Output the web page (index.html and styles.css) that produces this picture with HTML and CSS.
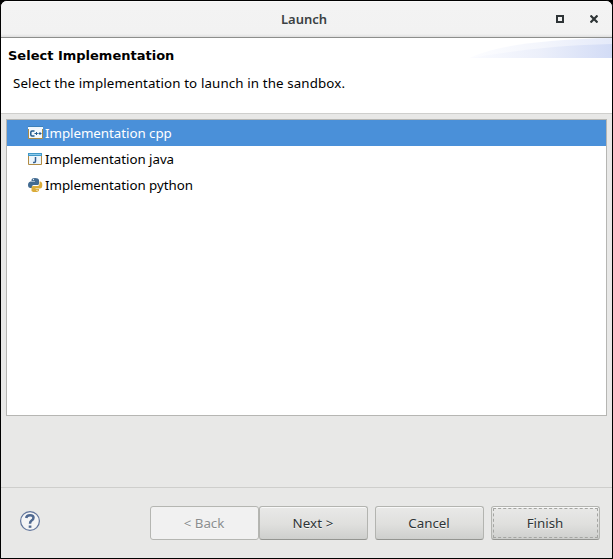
FILE: index.html
```html
<!DOCTYPE html>
<html lang="en">
<head>
<meta charset="utf-8">
<title>Launch</title>
<link rel="stylesheet" href="styles.css">
</head>
<body>
<div class="window">
  <header class="titlebar">
    <span class="title">Launch</span>
    <div class="controls">
      <svg width="8" height="8" viewBox="0 0 8 8"><path d="M1 1h6v6H1z" fill="none" stroke="#2e3436" stroke-width="2"/></svg>
      <svg width="8" height="8" viewBox="0 0 8 8"><path d="M.5.5l7 7M7.500.5L.5 7.500" fill="none" stroke="#2e3436" stroke-width="2.200"/></svg>
    </div>
  </header>
  <section class="banner">
    <h1>Select Implementation</h1>
    <p>Select the implementation to launch in the sandbox.</p>
    <svg class="swoosh" width="142" height="20" viewBox="0 0 142 20">
      <defs><linearGradient id="sky"><stop offset="0" stop-color="#fafbff"/><stop offset=".5" stop-color="#eaeefa"/><stop offset="1" stop-color="#cfd9f5"/></linearGradient></defs>
      <path d="M0 20C20 9 72 1 142 0V20Z" fill="url(#sky)" opacity=".55"/>
      <path d="M0 20C35 14 86 7 142 6V20Z" fill="url(#sky)" opacity=".85"/>
    </svg>
  </section>
  <main class="content">
    <ul class="list">
      <li class="selected">
        <svg width="16" height="16" viewBox="0 0 16 16"><path d="M.5 2.500h14v11H.5z" fill="#f3f8fd" stroke="#a98b48"/><path d="M0 1h15v3H0z" fill="#eef6fd"/><path d="M0 1.500h15" stroke="#3c7fb8"/><path d="M6.500 6H4q-1.200 0-1.200 1.200v2.600q0 1.200 1.200 1.200h2.500" fill="none" stroke="#245b8d" stroke-width="1.500"/><path d="M6.500 8.500h3.300M8.500 7v3M10.500 8.500h3M12 7v3" stroke="#245b8d"/></svg>
        <span>Implementation cpp</span>
      </li>
      <li>
        <svg width="16" height="16" viewBox="0 0 16 16"><path d="M.5 2.500h13v11H.5z" fill="#edf6fc" stroke="#b18b43"/><path d="M0 2h14v3H0z" fill="#4098c8"/><path d="M1 3.500h12" stroke="#8dcaeb"/><path d="M7.500 6v4.300q0 1.200-1.200 1.200H5" fill="none" stroke="#355f91" stroke-width="1.500"/></svg>
        <span>Implementation java</span>
      </li>
      <li>
        <svg width="16" height="16" viewBox="0 0 16 16"><path d="M3.500 4V3q0-2 3.500-2t4 2v3.500q0 1.500-1.500 1.500H5.500Q4 8 4 10v1H2.500Q0 11 0 8t2.500-3.500H7V4Z" fill="#426b91"/><path d="M11.500 4.500H12q2.300 0 2.300 3.500t-2.300 3.500H7.500v.5H11v1q0 2-4 2t-3.500-2v-2.500Q3.500 9 5 9h4.500q2 0 2-2Z" fill="#dbac39"/><circle cx="5.500" cy="2.600" r=".65" fill="#fff"/><circle cx="9" cy="13.300" r=".65" fill="#fff"/></svg>
        <span>Implementation python</span>
      </li>
    </ul>
  </main>
  <footer class="actions">
    <svg class="help" width="22" height="22" viewBox="0 0 22 22"><circle cx="11" cy="11" r="9.400" fill="#f5f5f6" stroke="#60749b" stroke-width="1.200"/><path d="M7.200 8Q7.500 5.200 11 5.200t3.500 2.500Q14.500 9.300 12.600 10.500Q11 11.500 11 13.800" fill="none" stroke="#506991" stroke-width="2.500"/><path d="M9.700 15.500h2.700v2.300H9.700z" fill="#506991"/></svg>
    <button class="back" disabled>&lt; Back</button>
    <button class="next">Next &gt;</button>
    <button class="cancel">Cancel</button>
    <button class="finish">Finish</button>
  </footer>
</div>
</body>
</html>
```
FILE: styles.css
```css
* { box-sizing: border-box; }
html { background: #000; }
body { margin: 0; font: 13.33px/20px "Noto Sans", sans-serif; color: #000; }
.window {
  height: 559px;
  border: 1px solid #000;
  border-radius: 7px 7px 0 0;
  background: #e8e8e7;
  overflow: hidden;
  display: flex;
  flex-direction: column;
}
.titlebar {
  position: relative;
  height: 37px;
  flex: none;
  display: flex;
  align-items: center;
  justify-content: center;
  background: linear-gradient(#fff 0, #f3f3f3 1px, #f2f2f2 33px, #dedede 36px);
  border-bottom: 1px solid #8d8e8c;
  color: #3b4143;
}
.title { font-weight: 600; font-size: 13px; margin-right: 5px; }
.controls { position: absolute; right: 14px; top: 14px; display: flex; gap: 26px; }
.banner {
  position: relative;
  height: 76px;
  flex: none;
  padding: 8px 7px 0;
  background: #fff;
  border-bottom: 1px solid #cfcfcd;
}
h1 { margin: 0; font: bold 13px/20px "DejaVu Sans", sans-serif; }
.banner p { margin: 7px 0 0 5px; letter-spacing: .12px; }
.swoosh { position: absolute; right: 0; top: 0; }
.content { height: 373px; flex: none; padding: 5px 5px 0; }
.list {
  height: 297px;
  margin: 0;
  padding: 0;
  list-style: none;
  background: #fff;
  border: 1px solid #b6b6b3;
}
.list li { height: 26px; padding-left: 21px; display: flex; align-items: center; gap: 1px; letter-spacing: -.04px; }
.list .selected { background: #4a90d9; color: #fff; }
.actions {
  flex: 1;
  display: flex;
  align-items: center;
  padding: 0 12px 0 18px;
  border-top: 1px solid #cececc;
}
.help { margin: -4px auto 0 0; }
button {
  width: 109px;
  height: 34px;
  padding: 0 1px 0 0;
  border: 1px solid #b3b4b0;
  border-bottom-color: #949591;
  border-radius: 3px;
  background: linear-gradient(#e9e9e8, #dfdfdd 55%, #cecfcd);
  box-shadow: inset 0 1px #f8f8f8;
  color: #2e3436;
  font: inherit;
  text-shadow: 0 1px rgba(255, 255, 255, .7);
}
.back { background: #f1f1f1; border-color: #b5b6b2; color: #8b8e8f; box-shadow: none; }
.next { letter-spacing: .15px; }
.cancel { margin: 0 7px; }
.finish { outline: 1px dashed #a4a5a2; outline-offset: -3px; }
```
